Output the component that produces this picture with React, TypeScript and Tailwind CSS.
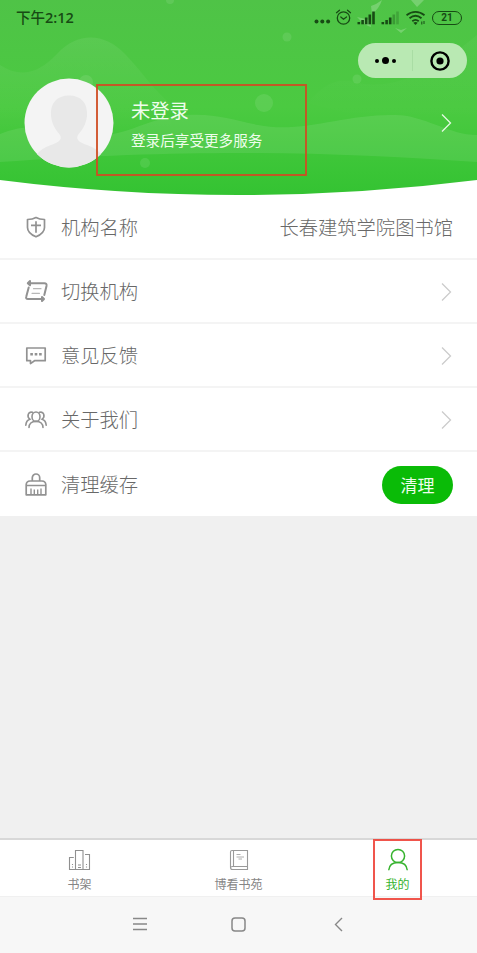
import React from "react";

type IconProps = { className?: string };

const FONT = "font-['Noto_Sans_CJK_SC',sans-serif]";

const ShieldIcon = () => (
  <svg width="22" height="24" viewBox="0 0 22 24" fill="none" stroke="#929292" strokeWidth="1.7" strokeLinejoin="round">
    <path d="M11 1.500C8.500 3 5.500 3.500 2.500 3.500V11.500c0 5 4.200 7.500 8.500 9.300 4.300-1.800 8.500-4.300 8.500-9.300V3.500C16.500 3.500 13.500 3 11 1.500Z" />
    <path d="M11 5.300v11.500M6 9.300h10" />
  </svg>
);

const SwitchIcon = () => (
  <svg width="24" height="24" viewBox="0 0 24 24" fill="none" stroke="#929292" strokeWidth="2" strokeLinecap="round" strokeLinejoin="round">
    <path d="M4.500 3.300H20.300Q23 3.300 22.500 6L20.300 15" />
    <path d="M4.700 7.500 2.300 16.500Q1.500 19 4 19H18" />
    <path d="M6 1 3.800 3.300 6 5.300ZM18 17 20 19 18 21Z" fill="#929292" />
    <path d="M9.500 8.700h7.500M8 13.300h7.500" strokeWidth="1.2" stroke="#b8b8b8" />
  </svg>
);

const FeedbackIcon = () => (
  <svg width="22" height="22" viewBox="0 0 22 22" fill="none" stroke="#929292" strokeWidth="1.7" strokeLinejoin="round">
    <path d="M1.800 3H20.200V15.700H9.500L5.500 18.600V15.700H1.800Z" />
    <path d="M5.300 9.300h2.600M9.700 9.300h2.600M14.100 9.300h2.600" strokeWidth="2.600" />
  </svg>
);

const PeopleIcon = () => (
  <svg width="24" height="22" viewBox="0 0 24 22" fill="none" stroke="#929292" strokeWidth="1.600" strokeLinecap="round">
    <ellipse cx="12" cy="7.700" rx="4" ry="4.700" />
    <path d="M5 18.500C5 15 7.500 12.400 12 12.400S19 15 19 18.500" />
    <path d="M8.500 3.300C4 2 2.600 7.500 5.800 10.200C3.200 11 2 13.500 1.800 16.300" />
    <path d="M15.500 3.300C20 2 21.400 7.500 18.200 10.200C20.800 11 22 13.500 22.200 16.300" />
  </svg>
);

const CleanIcon = () => (
  <svg width="22" height="24" viewBox="0 0 22 24" fill="none" stroke="#929292" strokeWidth="1.700" strokeLinejoin="round">
    <path d="M7.300 8V4.700a3.700 3.700 0 0 1 7.400 0V8" />
    <path d="M1.200 21.800V11.500Q1.500 8.100 5 8H17Q20.500 8.100 20.800 11.500V21.800ZM1.200 12.500H20.800" />
    <path d="M6 15.500v6M9.300 16.500v5M12.700 16.500v5M16 15.500v6" strokeWidth="1.400" />
  </svg>
);

const ChevronIcon = ({ className }: IconProps) => (
  <svg className={className} width="11" height="20" viewBox="0 0 11 20" fill="none" stroke="currentColor" strokeWidth="1.300">
    <path d="m1 1.500 8.500 8.500L1 18.500" />
  </svg>
);

const SignalIcon = ({ faded }: { faded?: boolean }) => (
  <svg width="19" height="14" viewBox="0 0 19 14" fill="#174b14">
    <rect x="0.500" y="11" width="2.600" height="2.300" />
    <rect x="4.300" y="9" width="2.600" height="4.300" />
    <rect x="7.900" y="6.500" width="2.600" height="6.800" />
    <rect x="11.500" y="3.500" width="2.600" height="9.800" opacity={faded ? 0.35 : 1} />
    <rect x="15.200" y="0.500" width="2.600" height="12.800" opacity={faded ? 0.25 : 1} />
  </svg>
);

const StatusBar = () => (
  <div className="flex h-[35px] items-center justify-between pl-4 pr-[15px] text-[#174b14]">
    <span className="text-[14.5px] font-medium leading-5">
      下午<span className="font-['Open_Sans',sans-serif] font-semibold">2:12</span>
    </span>
    <div className="flex items-center">
      <svg width="17" height="16" viewBox="0 0 17 16" fill="currentColor">
        <circle cx="2.500" cy="11.500" r="2" />
        <circle cx="8.300" cy="11.500" r="2" />
        <circle cx="14.100" cy="11.500" r="2" />
      </svg>
      <svg className="ml-1" width="17" height="17" viewBox="0 0 17 17" fill="none" stroke="currentColor" strokeWidth="1.300" strokeLinecap="round">
        <circle cx="8.500" cy="9" r="6.200" />
        <path d="m5.800 8 2.700 2.200L11.500 8M1.500 3.700 4.500 1.200M15.500 3.700l-3-2.500" />
      </svg>
      <span className="ml-[5px]"><SignalIcon /></span>
      <span className="ml-[5px]"><SignalIcon faded /></span>
      <svg className="ml-[6px]" width="20" height="16" viewBox="0 0 20 16" fill="none" stroke="currentColor" strokeWidth="1.800">
        <path d="M0.500 5.200c5.500-4.500 12.500-4.500 18 0M3.500 8.300c3.700-3.200 8.300-3.200 12 0M6.300 11.200c2.200-1.800 4.200-1.800 6.400 0" />
        <path d="m9.500 15-2.200-2.200q2.200-1.600 4.400 0Z" fill="currentColor" stroke="none" />
        <path d="M15.800 11.500v3M18 11v3" strokeWidth="1" />
      </svg>
      <span className="ml-[6px] flex h-[14px] w-[30px] items-center justify-center rounded-full border border-[#174b14] font-['Roboto',sans-serif] text-[10px] font-bold leading-none">
        21
      </span>
    </div>
  </div>
);

const HeaderBackground = () => (
  <svg className="absolute inset-0" width="477" height="197" viewBox="0 0 477 197">
    <defs>
      <linearGradient id="green" x1="0" y1="0" x2="0" y2="1">
        <stop offset="0" stopColor="#4fc347" />
        <stop offset="0.550" stopColor="#4bca41" />
        <stop offset="1" stopColor="#34c332" />
      </linearGradient>
      <linearGradient id="wave" x1="0" y1="0" x2="0" y2="1">
        <stop offset="0" stopColor="#fff" stopOpacity="0.070" />
        <stop offset="1" stopColor="#fff" stopOpacity="0" />
      </linearGradient>
    </defs>
    <path d="M0 0H477V180Q358 195 238 195T0 180Z" fill="url(#green)" />
    <path d="M0 65C20 78 38 74 57 54C78 31 105 33 125 54C145 75 155 92 171 104V130H0Z" fill="url(#wave)" />
    <path d="M0 134Q25 124 51 128C100 145 124 131 154 121C200 108 225 118 258 125C302 134 343 114 395 115C424 115 449 135 477 135V162C330 152 200 148 0 162Z" fill="#fff" opacity="0.085" />
    <path d="M308 103Q330 75 354 82Q405 96 477 35V120Q449 122 424 116Q395 110 350 114Z" fill="url(#wave)" opacity="0.5" />
    <g fill="#fff" opacity="0.090">
      <circle cx="287" cy="37" r="4.500" />
      <circle cx="357" cy="79" r="4.500" />
      <circle cx="264" cy="103" r="9" />
      <circle cx="145" cy="163" r="5" />
      <circle cx="170" cy="0" r="4" />
      <circle cx="86" cy="82" r="7" />
    </g>
    <g fill="#fff" opacity="0.220">
      <path d="M371 6Q377 4 382 0Q379 9 372 14ZM357 17L370 20L371 27Q364 25 357 17ZM411 0L417 7L424 0ZM395 28L401 30L407 28L401 33Z" />
    </g>
  </svg>
);

const Capsule = () => (
  <div className="absolute left-[358px] top-[43px] flex h-[35px] w-[109px] items-center rounded-full bg-[#b9e9b3]">
    <div className="flex flex-1 items-center justify-center gap-[3px]">
      <span className="size-1 rounded-full bg-black" />
      <span className="size-[7px] rounded-full bg-black" />
      <span className="size-1 rounded-full bg-black" />
    </div>
    <span className="h-[21px] w-px bg-[#a9dda4]" />
    <div className="flex flex-1 items-center justify-center">
      <svg width="20" height="20" viewBox="0 0 20 20">
        <circle cx="10" cy="10" r="8.600" fill="none" stroke="#000" strokeWidth="2.400" />
        <circle cx="10" cy="10" r="3.600" />
      </svg>
    </div>
  </div>
);

const Header = () => (
  <header className="relative h-[196px] w-full">
    <HeaderBackground />
    <div className="relative">
      <StatusBar />
      <div className="flex items-center pl-6 pr-[25px] pt-[43px]">
        <svg className="size-[90px] shrink-0" viewBox="0 0 90 90">
          <defs>
            <clipPath id="avatar"><circle cx="45" cy="45" r="44.500" /></clipPath>
          </defs>
          <g clipPath="url(#avatar)">
            <rect width="90" height="90" fill="#f4f4f4" />
            <path d="M45 17.500C33 17.500 26 25 27 38C28 47 32 52 36 57C39 62 33 65 27 67Q18 70 13 76V90H77V76Q72 70 63 67C57 65 51 62 54 57C58 52 62 47 63 38C64 25 57 17.500 45 17.500Z" fill="#e8e8e8" />
          </g>
        </svg>
        <div className="ml-[17px] flex-1 pt-[2px] text-[#effdec]">
          <p className="text-[19.3px] leading-7">未登录</p>
          <p className="mt-1 text-[14.6px] leading-6">登录后享受更多服务</p>
        </div>
        <ChevronIcon className="text-[#e5f9e3]" />
      </div>
    </div>
    <Capsule />
    <div className="absolute left-[96px] top-[84px] h-[92px] w-[211px] border-2 border-[#cf4c22]/90" />
  </header>
);

const rows = [
  { icon: <ShieldIcon />, label: "机构名称", right: "org" },
  { icon: <SwitchIcon />, label: "切换机构", right: "arrow" },
  { icon: <FeedbackIcon />, label: "意见反馈", right: "arrow" },
  { icon: <PeopleIcon />, label: "关于我们", right: "arrow" },
  { icon: <CleanIcon />, label: "清理缓存", right: "clean" },
];

const Menu = () => (
  <main className="bg-white text-[19.3px] font-light text-[#686868]">
    {rows.map((row) => (
      <div key={row.label} className="flex h-16 items-center border-b-2 border-[#f4f4f4] px-6 pt-px last:border-b-0">
        <span className="flex w-6 shrink-0 items-center justify-center">{row.icon}</span>
        <span className="ml-[13px] flex-1">{row.label}</span>
        {row.right === "org" && <span>长春建筑学院图书馆</span>}
        {row.right === "arrow" && <ChevronIcon className="mr-px text-[#ccc]" />}
        {row.right === "clean" && (
          <button className="h-[38px] w-[71px] rounded-full bg-[#0abb07] text-[17px] font-normal text-[#effdec]">清理</button>
        )}
      </div>
    ))}
  </main>
);

const ShelfIcon = () => (
  <svg width="23" height="22" viewBox="0 0 23 22" fill="none" stroke="#8f8f8f" strokeWidth="1.1">
    <path d="M7.500 20.500V1.500H15V20.500M5.800 8.500H1.500V20.500H21.500V5.500H17" />
    <path d="M4.500 15v1M4.500 17.500v1M10 16h3M10 18.500h3M18.500 15v1M18.500 17.500v1" />
  </svg>
);

const BookIcon = () => (
  <svg width="20" height="22" viewBox="0 0 20 22" fill="none" stroke="#9a9a9a" strokeWidth="1.1">
    <path d="M18.500 17.500V1.500H3Q1.500 1.500 1.500 3V18.500Q1.500 20.500 3.500 20.500H18.500V17.500H3.500Q1.500 17.500 1.500 19M4.500 1.500V17.500" />
    <path d="M7.500 5.500h4M7.500 8h7.500M9.500 10h3.500" strokeWidth="0.800" />
  </svg>
);

const MineIcon = () => (
  <svg width="22" height="24" viewBox="0 0 22 24" fill="none" stroke="#36b32e" strokeWidth="1.500">
    <circle cx="11" cy="8" r="6.600" />
    <path d="M1.700 22.300C2.200 17 6 14.600 11 14.600S19.800 17 20.300 22.300" />
  </svg>
);

const TabBar = () => (
  <nav className="grid h-[58px] grid-cols-3 border-t-2 border-[#d8d8d8] bg-white text-[12px] leading-4 text-[#858585]">
    <div className="flex flex-col items-center pt-[9px]">
      <ShelfIcon />
      <span className="mt-[5px]">书架</span>
    </div>
    <div className="flex flex-col items-center pt-[9px]">
      <BookIcon />
      <span className="mt-[5px]">博看书苑</span>
    </div>
    <div className="relative flex flex-col items-center pt-2 text-[#36b32e]">
      <MineIcon />
      <span className="mt-1">我的</span>
      <div className="absolute left-[55px] top-[-1px] h-[61px] w-[49px] border-2 border-[#ee4238]/90" />
    </div>
  </nav>
);

const SystemNav = () => (
  <div className="flex h-[57px] items-center justify-between border-t border-[#f0f0f0] bg-[#f7f7f7] px-[133px] pb-[2px]">
    <svg width="14" height="14" viewBox="0 0 14 14" stroke="#888" strokeWidth="1.300">
      <path d="M0 1.500h14M0 7h14M0 12.500h14" />
    </svg>
    <svg className="-ml-[5px]" width="15" height="15" viewBox="0 0 15 15" fill="none" stroke="#888" strokeWidth="1.500">
      <rect x="1" y="1" width="13" height="13" rx="3" />
    </svg>
    <svg width="10" height="15" viewBox="0 0 10 15" fill="none" stroke="#888" strokeWidth="1.400">
      <path d="M8 1 1.500 7.500 8 14" />
    </svg>
  </div>
);

export default function App() {
  return (
    <div className={`flex h-[953px] w-[477px] flex-col overflow-hidden bg-[#f0f0f0] ${FONT}`}>
      <div className="bg-white">
        <Header />
        <Menu />
      </div>
      <div className="flex-1" />
      <TabBar />
      <SystemNav />
    </div>
  );
}
